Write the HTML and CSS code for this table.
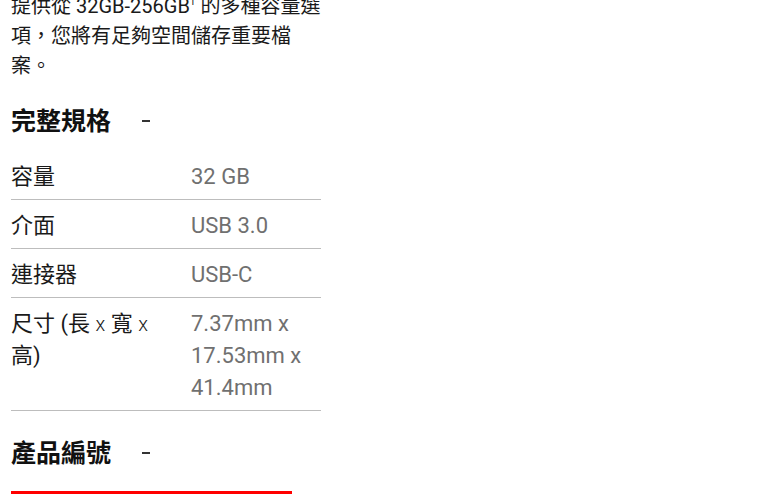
FILE: index.html
```html
<!DOCTYPE html>
<html lang="zh-Hant">
<head>
<meta charset="utf-8">
<link rel="stylesheet" href="styles.css">
</head>
<body>
<main class="col">
  <p class="intro">提供從 32GB-256GB<sup>1</sup> 的多種容量選項，您將有足夠空間儲存重要檔案。</p>

  <section class="acc">
    <h2 class="acc-head"><span>完整規格</span><span class="toggle"></span></h2>
    <div class="specs">
      <div class="row"><div class="k">容量</div><div class="v">32 GB</div></div>
      <div class="row"><div class="k">介面</div><div class="v">USB 3.0</div></div>
      <div class="row"><div class="k">連接器</div><div class="v">USB-C</div></div>
      <div class="row"><div class="k">尺寸 (長 <span class="x">x</span> 寬 <span class="x">x</span> 高)</div><div class="v">7.37mm x 17.53mm x 41.4mm</div></div>
    </div>
  </section>

  <section class="acc">
    <h2 class="acc-head"><span>產品編號</span><span class="toggle"></span></h2>
  </section>
  <div class="redbar"></div>
</main>
</body>
</html>
```
FILE: styles.css
```css
html, body {
  margin: 0;
  padding: 0;
  background: #fff;
  overflow: hidden;
}
body {
  font-family: Roboto, "Noto Sans CJK TC", sans-serif;
  color: #1a1a1a;
}
.col {
  width: 310px;
  padding-left: 11px;
}
.intro {
  margin: -9px 0 0 0;
  font-size: 20px;
  line-height: 30px;
  color: #1a1a1a;
}
.intro sup {
  font-size: 10px;
  line-height: 0;
  vertical-align: 8px;
}
.acc-head {
  margin: 25px 0 0 0;
  display: flex;
  align-items: center;
  gap: 31px;
  font-size: 25px;
  line-height: 32px;
  font-weight: 700;
  color: #111;
}
.toggle {
  display: inline-block;
  width: 8px;
  height: 2px;
  background: #333;
  margin-top: -3px;
}
.specs {
  margin-top: 13px;
}
.row {
  display: grid;
  grid-template-columns: 180px 1fr;
  padding: 10px 0 6px;
  border-bottom: 1px solid #bdbdbd;
  line-height: 32px;
}
.k {
  color: #1a1a1a;
  font-size: 22px;
  padding-right: 14px;
}
.k .x {
  font-weight: 300;
  font-size: 20px;
}
.v {
  color: #707070;
  font-size: 22px;
}
.acc + .acc .acc-head {
  margin-top: 27px;
}
.redbar {
  margin-top: 21px;
  width: 281px;
  height: 3px;
  background: #ff0000;
}
```
